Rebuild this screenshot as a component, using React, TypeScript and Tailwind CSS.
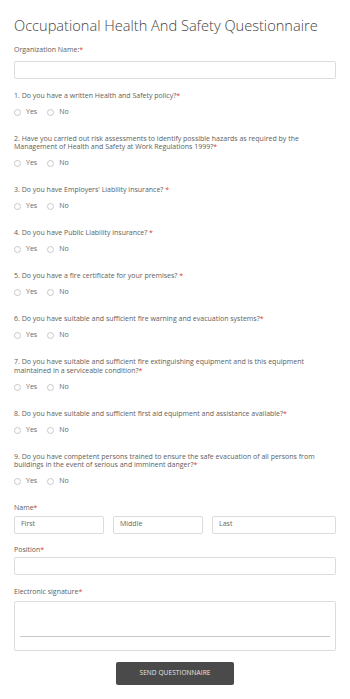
import React from "react";

const Req = () => <span className="text-[#e53935]">*</span>;

function Label({ children }: { children: React.ReactNode }) {
  return <div className="text-[7px] leading-[8.5px] text-[#606060]">{children}</div>;
}

function Radios() {
  return (
    <div className="mt-[7px] flex h-[10px] items-center text-[7px] text-[#666]">
      <span className="h-[7px] w-[7px] rounded-full border border-[#c8c8c8] bg-white" />
      <span className="ml-[5px]">Yes</span>
      <span className="ml-[10px] h-[7px] w-[7px] rounded-full border border-[#c8c8c8] bg-white" />
      <span className="ml-[5px]">No</span>
    </div>
  );
}

function Question({ text }: { text: string }) {
  return (
    <div className="mb-[17.5px]">
      <Label>
        {text}
        <Req />
      </Label>
      <Radios />
    </div>
  );
}

const Input = ({ placeholder, className }: { placeholder?: string; className?: string }) => (
  <div
    className={
      "flex h-[18px] items-center rounded-[2px] border border-[#dcdcdc] bg-white pl-[6px] text-[7px] text-[#666] " +
      (className ?? "")
    }
  >
    {placeholder}
  </div>
);

export default function App() {
  return (
    <div
      className="min-h-[699px] w-[350px] bg-white px-[14px] pt-[14px]"
      style={{ fontFamily: '"Open Sans", "Noto Sans", sans-serif' }}
    >
      <h1 className="whitespace-nowrap text-[14.6px] font-light leading-[22px] text-[#444]">
        Occupational Health And Safety Questionnaire
      </h1>
      <div className="mt-[10px]">
        <Label>
          Organization Name:<Req />
        </Label>
        <Input className="mt-[6px]" />
      </div>
      <div className="mt-[13px]">
        <Question text="1. Do you have a written Health and Safety policy?" />
        <Question text="2. Have you carried out risk assessments to identify possible hazards as required by the Management of Health and Safety at Work Regulations 1999?" />
        <Question text="3. Do you have Employers' Liability insurance? " />
        <Question text="4. Do you have Public Liability insurance? " />
        <Question text="5. Do you have a fire certificate for your premises? " />
        <Question text="6. Do you have suitable and sufficient fire warning and evacuation systems?" />
        <Question text="7. Do you have suitable and sufficient fire extinguishing equipment and is this equipment maintained in a serviceable condition?" />
        <Question text="8. Do you have suitable and sufficient first aid equipment and assistance available?" />
        <Question text="9. Do you have competent persons trained to ensure the safe evacuation of all persons from buildings in the event of serious and imminent danger?" />
      </div>
      <div className="mt-[0px]">
        <Label>
          Name<Req />
        </Label>
        <div className="mt-[3px] flex gap-[9px]">
          <Input placeholder="First" className="w-[90px]" />
          <Input placeholder="Middle" className="w-[90px]" />
          <Input placeholder="Last" className="flex-1" />
        </div>
      </div>
      <div className="mt-[12px]">
        <Label>
          Position<Req />
        </Label>
        <Input className="mt-[3px]" />
      </div>
      <div className="mt-[13px]">
        <Label>
          Electronic signature<Req />
        </Label>
        <div className="mt-[4px] flex h-[50px] flex-col justify-end rounded-[2px] border border-[#dcdcdc] bg-white px-[5px] pb-[13px]">
          <div className="h-[1px] bg-[#c8c8c8]" />
        </div>
      </div>
      <div className="mt-[11px] flex justify-center">
        <button className="flex h-[23px] w-[118px] items-center justify-center rounded-[2px] bg-[#4a4a4a] text-[6.5px] tracking-[0.1px] text-[#e6e6e6]">
          SEND QUESTIONNAIRE
        </button>
      </div>
    </div>
  );
}
